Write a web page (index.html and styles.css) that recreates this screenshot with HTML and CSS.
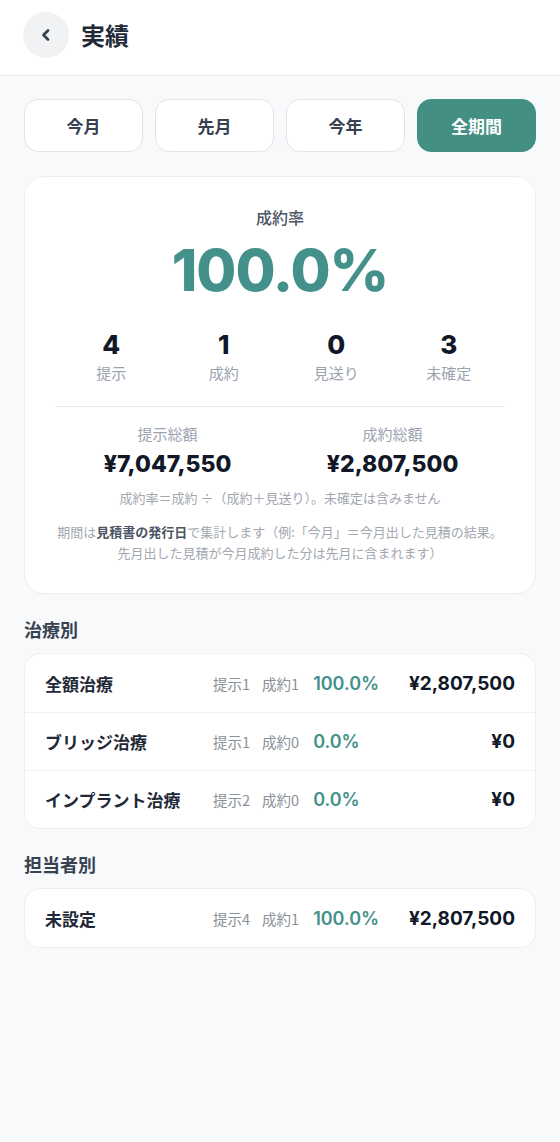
FILE: index.html
```html
<!DOCTYPE html>
<html lang="ja">
<head>
<meta charset="utf-8">
<link rel="stylesheet" href="styles.css">
</head>
<body>
<header class="header">
  <button class="back" aria-label="戻る">
    <svg width="16" height="16" viewBox="0 0 16 16"><path d="M10 3.5 L5.5 8 L10 12.5" fill="none" stroke="#374151" stroke-width="2.8" stroke-linecap="round" stroke-linejoin="round"/></svg>
  </button>
  <h1 class="title">実績</h1>
</header>
<main class="main">
  <div class="tabs">
    <button class="tab">今月</button>
    <button class="tab">先月</button>
    <button class="tab">今年</button>
    <button class="tab active">全期間</button>
  </div>

  <section class="summary">
    <div class="rate-label">成約率</div>
    <div class="rate">100.0%</div>
    <div class="stats">
      <div class="stat"><div class="stat-num">4</div><div class="stat-label">提示</div></div>
      <div class="stat"><div class="stat-num">1</div><div class="stat-label">成約</div></div>
      <div class="stat"><div class="stat-num">0</div><div class="stat-label">見送り</div></div>
      <div class="stat"><div class="stat-num">3</div><div class="stat-label">未確定</div></div>
    </div>
    <div class="totals">
      <div class="total"><div class="total-label">提示総額</div><div class="total-num">¥7,047,550</div></div>
      <div class="total"><div class="total-label">成約総額</div><div class="total-num">¥2,807,500</div></div>
    </div>
    <p class="note">成約率＝成約 ÷（成約＋見送り）。未確定は含みません</p>
    <p class="note2">期間は<strong>見積書の発行日</strong>で集計します（例:「今月」＝今月出した見積の結果。<br>先月出した見積が今月成約した分は先月に含まれます）</p>
  </section>

  <h2 class="section-title">治療別</h2>
  <div class="list">
    <div class="row">
      <span class="name">全額治療</span>
      <span class="meta">提示1</span><span class="meta">成約1</span>
      <span class="pct">100.0%</span>
      <span class="amount">¥2,807,500</span>
    </div>
    <div class="row">
      <span class="name">ブリッジ治療</span>
      <span class="meta">提示1</span><span class="meta">成約0</span>
      <span class="pct">0.0%</span>
      <span class="amount">¥0</span>
    </div>
    <div class="row">
      <span class="name">インプラント治療</span>
      <span class="meta">提示2</span><span class="meta">成約0</span>
      <span class="pct">0.0%</span>
      <span class="amount">¥0</span>
    </div>
  </div>

  <h2 class="section-title">担当者別</h2>
  <div class="list">
    <div class="row">
      <span class="name">未設定</span>
      <span class="meta">提示4</span><span class="meta">成約1</span>
      <span class="pct">100.0%</span>
      <span class="amount">¥2,807,500</span>
    </div>
  </div>
</main>
</body>
</html>
```

FILE: styles.css
```css
* { box-sizing: border-box; }
html, body { margin: 0; padding: 0; }
body {
  background: #f8f9fb;
  font-family: Inter, "Noto Sans CJK JP", sans-serif;
  color: #111827;
  min-height: 1142px;
}
.header {
  height: 76px;
  background: #fff;
  border-bottom: 1px solid #e5e7eb;
  display: flex;
  align-items: center;
  padding: 0 23px;
  gap: 12px;
}
.back {
  width: 46px;
  height: 46px;
  border-radius: 50%;
  border: none;
  background: #f1f2f4;
  display: flex;
  align-items: center;
  justify-content: center;
  padding: 0;
  margin-top: -6px;
}
.title {
  margin: -6px 0 0;
  font-family: "Noto Sans CJK JP", sans-serif;
  font-size: 24px;
  font-weight: 700;
  color: #1f2937;
}
.main {
  padding: 23px 24px 40px;
}
.tabs {
  display: grid;
  grid-template-columns: repeat(4, 1fr);
  gap: 12px;
}
.tab {
  height: 53px;
  border: 1px solid #e2e4e8;
  border-radius: 14px;
  background: #fff;
  font-family: "Noto Sans CJK JP", sans-serif;
  font-size: 17px;
  font-weight: 700;
  color: #374151;
}
.tab.active {
  background: #438f83;
  border-color: #438f83;
  color: #fff;
}
.summary {
  margin-top: 24px;
  background: #fff;
  border: 1px solid #eceef1;
  border-radius: 20px;
  padding: 28px 30px 30px;
  text-align: center;
}
.rate-label {
  font-family: "Noto Sans CJK JP", sans-serif;
  font-size: 16px;
  font-weight: 500;
  color: #4b5563;
  line-height: 24px;
}
.rate {
  font-size: 58px;
  font-weight: 800;
  color: #43918a;
  line-height: 82px;
  letter-spacing: -1px;
}
.stats {
  display: grid;
  grid-template-columns: repeat(4, 1fr);
  margin-top: 17px;
  padding-bottom: 22px;
  border-bottom: 1px solid #e7e9ec;
}
.stat-num {
  font-size: 26px;
  font-weight: 800;
  line-height: 34px;
  color: #111827;
}
.stat-label {
  font-family: "Noto Sans CJK JP", sans-serif;
  font-size: 15px;
  color: #9ca3af;
  line-height: 22px;
}
.totals {
  display: grid;
  grid-template-columns: 1fr 1fr;
  margin-top: 16px;
}
.total-label {
  font-family: "Noto Sans CJK JP", sans-serif;
  font-size: 15px;
  color: #9ca3af;
  line-height: 22px;
}
.total-num {
  font-size: 23px;
  font-weight: 800;
  line-height: 32px;
  margin-top: 3px;
  color: #111827;
}
.note {
  margin: 8px 0 0;
  font-family: "Noto Sans CJK JP", sans-serif;
  font-size: 13px;
  color: #a3a8b0;
  line-height: 20px;
}
.note2 {
  margin: 13px 0 0;
  font-family: "Noto Sans CJK JP", sans-serif;
  font-size: 13px;
  color: #a3a8b0;
  line-height: 21px;
}
.note2 strong {
  color: #4b5563;
  font-weight: 700;
}
.section-title {
  margin: 22px 0 10px;
  font-family: "Noto Sans CJK JP", sans-serif;
  font-size: 18px;
  font-weight: 700;
  color: #374151;
  line-height: 27px;
}
.list {
  background: #fff;
  border: 1px solid #eceef1;
  border-radius: 16px;
  overflow: hidden;
}
.row {
  display: grid;
  grid-template-columns: 168px auto auto auto 1fr;
  align-items: center;
  height: 58px;
  padding: 0 20px;
  border-top: 1px solid #eef0f2;
}
.row:first-child { border-top: none; }
.name {
  font-family: "Noto Sans CJK JP", sans-serif;
  font-size: 17px;
  font-weight: 700;
  color: #1f2937;
}
.meta {
  font-family: "Noto Sans CJK JP", sans-serif;
  font-size: 14.5px;
  color: #8b9199;
  margin-right: 12px;
}
.pct {
  font-size: 18px;
  font-weight: 600;
  color: #43918a;
  margin-left: 2px;
}
.amount {
  text-align: right;
  font-size: 19px;
  font-weight: 700;
  color: #111827;
}
```
